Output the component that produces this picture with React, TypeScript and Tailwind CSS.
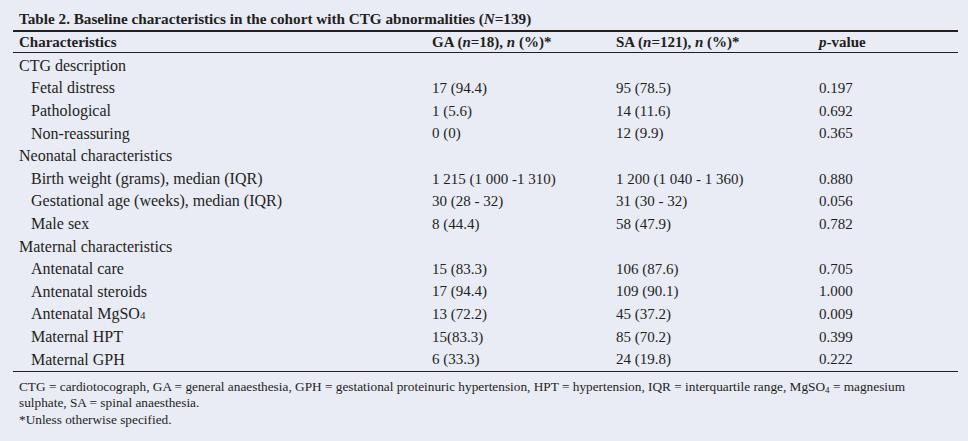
import React from "react";

type Row = { label: React.ReactNode; ga?: string; sa?: string; p?: string; section?: boolean };

const rows: Row[] = [
  { label: "CTG description", section: true },
  { label: "Fetal distress", ga: "17 (94.4)", sa: "95 (78.5)", p: "0.197" },
  { label: "Pathological", ga: "1 (5.6)", sa: "14 (11.6)", p: "0.692" },
  { label: "Non-reassuring", ga: "0 (0)", sa: "12 (9.9)", p: "0.365" },
  { label: "Neonatal characteristics", section: true },
  { label: "Birth weight (grams), median (IQR)", ga: "1 215 (1 000 -1 310)", sa: "1 200 (1 040 - 1 360)", p: "0.880" },
  { label: "Gestational age (weeks), median (IQR)", ga: "30 (28 - 32)", sa: "31 (30 - 32)", p: "0.056" },
  { label: "Male sex", ga: "8 (44.4)", sa: "58 (47.9)", p: "0.782" },
  { label: "Maternal characteristics", section: true },
  { label: "Antenatal care", ga: "15 (83.3)", sa: "106 (87.6)", p: "0.705" },
  { label: "Antenatal steroids", ga: "17 (94.4)", sa: "109 (90.1)", p: "1.000" },
  {
    label: (
      <>
        Antenatal MgSO<span className="text-[11px]">4</span>
      </>
    ),
    ga: "13 (72.2)",
    sa: "45 (37.2)",
    p: "0.009",
  },
  { label: "Maternal HPT", ga: "15(83.3)", sa: "85 (70.2)", p: "0.399" },
  { label: "Maternal GPH", ga: "6 (33.3)", sa: "24 (19.8)", p: "0.222" },
];

export default function App() {
  return (
    <div className="w-[968px] h-[441px] bg-[#e9ebf5] text-[#231f20] pt-[8px] font-['Liberation_Serif','Times_New_Roman',serif]">
      <div className="ml-[13px] w-[945px]">
        <div className="pl-[6px] h-[22px] leading-[22px] text-[15.2px] font-bold">
          Table 2. Baseline characteristics in the cohort with CTG abnormalities (<i>N</i>=139)
        </div>
        <div className="h-[2px] bg-[#231f20]" />
        <div className="flex h-[20px] items-center text-[15px] font-bold">
          <div className="w-[419px] pl-[6px]">Characteristics</div>
          <div className="w-[184px]">
            GA (<i>n</i>=18), <i>n</i> (%)*
          </div>
          <div className="w-[203px]">
            SA (<i>n</i>=121), <i>n</i> (%)*
          </div>
          <div>
            <i>p</i>-value
          </div>
        </div>
        <div className="h-px bg-[#231f20]" />
        <div className="text-[16px] pt-[1.5px]">
          {rows.map((r, i) => (
            <div key={i} className="flex h-[22.6px] items-center">
              <div className={r.section ? "w-[419px] pl-[6px]" : "w-[419px] pl-[18px]"}>{r.label}</div>
              <div className="w-[184px] text-[15px]">{r.ga}</div>
              <div className="w-[203px] text-[15px]">{r.sa}</div>
              <div className="text-[15px]">{r.p}</div>
            </div>
          ))}
        </div>
        <div className="h-px bg-[#231f20]" />
        <div className="pl-[6px] pt-[7px] text-[13.3px] leading-[16.5px]">
          <div>
            CTG = cardiotocograph, GA = general anaesthesia, GPH = gestational proteinuric hypertension, HPT = hypertension, IQR = interquartile range, MgSO
            <sub className="text-[9px]">4</sub> = magnesium
          </div>
          <div>sulphate, SA = spinal anaesthesia.</div>
          <div>*Unless otherwise specified.</div>
        </div>
      </div>
    </div>
  );
}
